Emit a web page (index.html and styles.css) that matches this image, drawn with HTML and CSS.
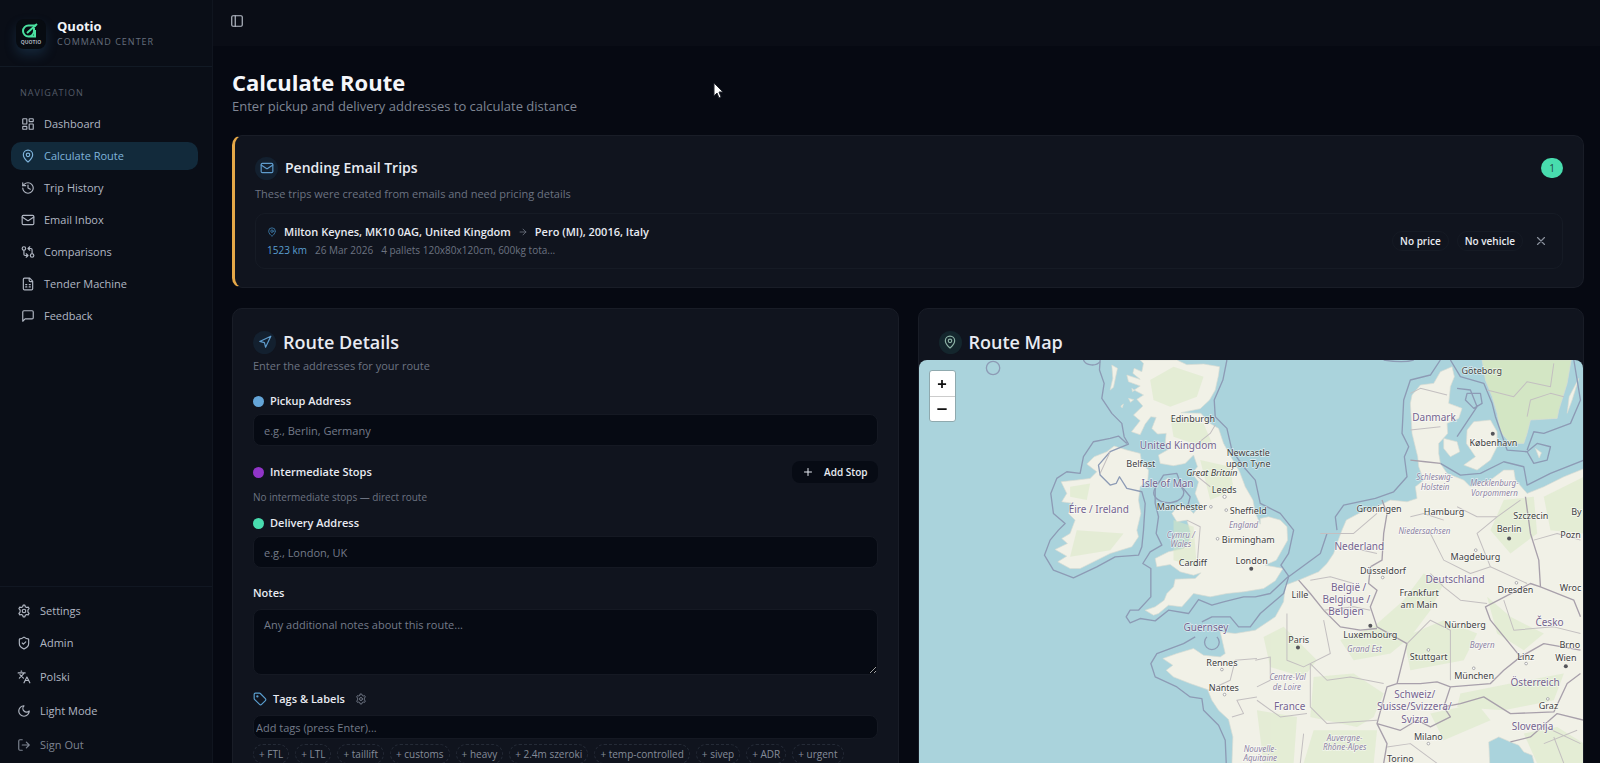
FILE: index.html
```html
<!DOCTYPE html>
<html lang="en">
<head>
    <meta charset="UTF-8">
    <meta name="viewport" content="width=device-width, initial-scale=1.0">
    <title>Quotio - Calculate Route</title>
    <link rel="stylesheet" href="styles.css">
</head>
<body>
    <!-- icon set -->
    <svg class="sprite" aria-hidden="true">
        <symbol id="i-dashboard" viewBox="0 0 24 24"><rect x="3" y="3" width="7" height="9" rx="1"/><rect x="14" y="3" width="7" height="5" rx="1"/><rect x="14" y="12" width="7" height="9" rx="1"/><rect x="3" y="16" width="7" height="5" rx="1"/></symbol>
        <symbol id="i-pin" viewBox="0 0 24 24"><path d="M20 10c0 5-5.500 10.200-7.400 11.800a1 1 0 0 1-1.200 0C9.500 20.200 4 15 4 10a8 8 0 0 1 16 0"/><circle cx="12" cy="10" r="3"/></symbol>
        <symbol id="i-history" viewBox="0 0 24 24"><path d="M3 12a9 9 0 1 0 9-9 9.750 9.750 0 0 0-6.740 2.740L3 8"/><path d="M3 3v5h5M12 7v5l4 2"/></symbol>
        <symbol id="i-mail" viewBox="0 0 24 24"><rect x="2" y="4" width="20" height="16" rx="2"/><path d="m22 7-9 5.700a2 2 0 0 1-2 0L2 7"/></symbol>
        <symbol id="i-compare" viewBox="0 0 24 24"><circle cx="5" cy="6" r="3"/><circle cx="19" cy="18" r="3"/><path d="M12 6h5a2 2 0 0 1 2 2v7M15 9l-3-3 3-3M12 18H7a2 2 0 0 1-2-2V9M9 15l3 3-3 3"/></symbol>
        <symbol id="i-file" viewBox="0 0 24 24"><path d="M15 2H6a2 2 0 0 0-2 2v16a2 2 0 0 0 2 2h12a2 2 0 0 0 2-2V7zM14 2v4a2 2 0 0 0 2 2h4M8 13h2M14 13h2M8 17h2M14 17h2"/></symbol>
        <symbol id="i-chat" viewBox="0 0 24 24"><path d="M21 15a2 2 0 0 1-2 2H7l-4 4V5a2 2 0 0 1 2-2h14a2 2 0 0 1 2 2z"/></symbol>
        <symbol id="i-gear" viewBox="0 0 24 24"><path d="M10.500 2h3l.8 2.800 2 1.200 2.900-.7 1.500 2.600-2 2.200v3.800l2 2.200-1.500 2.600-2.900-.7-2 1.200-.8 2.800h-3l-.8-2.800-2-1.200-2.900.7-1.500-2.600 2-2.200v-3.800l-2-2.200 1.500-2.600 2.900.7 2-1.200z"/><circle cx="12" cy="12" r="3"/></symbol>
        <symbol id="i-shield" viewBox="0 0 24 24"><path d="M20 13c0 5-3.500 7.500-7.700 9a1 1 0 0 1-.6 0C7.500 20.500 4 18 4 13V6a1 1 0 0 1 1-1c2 0 4.500-1.200 6.200-2.700a1.200 1.200 0 0 1 1.600 0C14.500 3.800 17 5 19 5a1 1 0 0 1 1 1zM9 12l2 2 4-4"/></symbol>
        <symbol id="i-lang" viewBox="0 0 24 24"><path d="m5 8 6 6M4 14l6-6 2-3M2 5h12M7 2h1M22 22l-5-10-5 10M14 18h6"/></symbol>
        <symbol id="i-moon" viewBox="0 0 24 24"><path d="M12 3a6 6 0 0 0 9 9 9 9 0 1 1-9-9z"/></symbol>
        <symbol id="i-logout" viewBox="0 0 24 24"><path d="M9 3H5a2 2 0 0 0-2 2v14a2 2 0 0 0 2 2h4M9 12h12M16 7l5 5-5 5"/></symbol>
        <symbol id="i-panel" viewBox="0 0 24 24"><rect x="3" y="3" width="18" height="18" rx="2"/><path d="M9 3v18"/></symbol>
        <symbol id="i-nav" viewBox="0 0 24 24"><path d="m3 11 19-9-9 19-2-8z"/></symbol>
        <symbol id="i-arrow" viewBox="0 0 24 24"><path d="M5 12h14M12 5l7 7-7 7"/></symbol>
        <symbol id="i-x" viewBox="0 0 24 24"><path d="M18 6 6 18M6 6l12 12"/></symbol>
        <symbol id="i-plus" viewBox="0 0 24 24"><path d="M5 12h14M12 5v14"/></symbol>
        <symbol id="i-tag" viewBox="0 0 24 24"><path d="M12.600 2.600A2 2 0 0 0 11.200 2H4a2 2 0 0 0-2 2v7.200a2 2 0 0 0 .6 1.400l8.700 8.700a2.400 2.400 0 0 0 3.400 0l6.600-6.600a2.400 2.400 0 0 0 0-3.400z"/><circle cx="7.500" cy="7.500" r="1"/></symbol>
    </svg>

    <div class="app">
        <aside class="sidebar">
            <div class="brand">
                <div class="logo">
                    <svg viewBox="0 0 30 30">
                        <path d="M20 6.500h-7.500a5.500 5.500 0 1 0 5.500 5.500V9M19 11v6.500h-6" fill="none" stroke="#4be0a0" stroke-width="2"/>
                        <path d="m11 14 10-9" fill="none" stroke="#4be0a0" stroke-width="2"/>
                        <text x="15" y="25" text-anchor="middle">QUOTIO</text>
                    </svg>
                </div>
                <div>
                    <p class="brand-name">Quotio</p>
                    <p class="brand-sub">COMMAND CENTER</p>
                </div>
            </div>
            <nav class="nav">
                <p class="nav-label">NAVIGATION</p>
                <a href="#"><svg class="icon"><use href="#i-dashboard"/></svg>Dashboard</a>
                <a href="#" class="active"><svg class="icon"><use href="#i-pin"/></svg>Calculate Route</a>
                <a href="#"><svg class="icon"><use href="#i-history"/></svg>Trip History</a>
                <a href="#"><svg class="icon"><use href="#i-mail"/></svg>Email Inbox</a>
                <a href="#"><svg class="icon"><use href="#i-compare"/></svg>Comparisons</a>
                <a href="#"><svg class="icon"><use href="#i-file"/></svg>Tender Machine</a>
                <a href="#"><svg class="icon"><use href="#i-chat"/></svg>Feedback</a>
            </nav>
            <div class="side-footer">
                <a href="#"><svg class="icon"><use href="#i-gear"/></svg>Settings</a>
                <a href="#"><svg class="icon"><use href="#i-shield"/></svg>Admin</a>
                <button><svg class="icon"><use href="#i-lang"/></svg>Polski</button>
                <button><svg class="icon"><use href="#i-moon"/></svg>Light Mode</button>
                <button class="muted"><svg class="icon"><use href="#i-logout"/></svg>Sign Out</button>
            </div>
        </aside>

        <div class="main">
            <header class="topbar">
                <button aria-label="Toggle sidebar"><svg class="icon"><use href="#i-panel"/></svg></button>
            </header>

            <main class="content">
                <h1>Calculate Route</h1>
                <p class="lead">Enter pickup and delivery addresses to calculate distance</p>

                <section class="card pending">
                    <div class="card-head">
                        <span class="bubble"><svg class="icon"><use href="#i-mail"/></svg></span>
                        <h2>Pending Email Trips</h2>
                        <span class="count">1</span>
                    </div>
                    <p class="hint">These trips were created from emails and need pricing details</p>
                    <div class="trip">
                        <div class="trip-info">
                            <p class="trip-route">
                                <svg class="icon pin"><use href="#i-pin"/></svg>
                                <span>Milton Keynes, MK10 0AG, United Kingdom</span>
                                <svg class="icon arrow"><use href="#i-arrow"/></svg>
                                <span>Pero (MI), 20016, Italy</span>
                            </p>
                            <p class="trip-meta">
                                <span class="km">1523 km</span>
                                <span>26 Mar 2026</span>
                                <span>4 pallets 120x80x120cm, 600kg tota...</span>
                            </p>
                        </div>
                        <span class="pill">No price</span>
                        <span class="pill">No vehicle</span>
                        <button class="close" aria-label="Dismiss"><svg class="icon"><use href="#i-x"/></svg></button>
                    </div>
                </section>

                <div class="columns">
                    <section class="card details">
                        <div class="card-head">
                            <span class="bubble"><svg class="icon"><use href="#i-nav"/></svg></span>
                            <h2 class="big">Route Details</h2>
                        </div>
                        <p class="hint">Enter the addresses for your route</p>
                        <form>
                            <label class="field-label" for="pickup"><i class="dot blue"></i>Pickup Address</label>
                            <input type="text" id="pickup" placeholder="e.g., Berlin, Germany">

                            <div class="stops">
                                <p class="field-label"><i class="dot purple"></i>Intermediate Stops</p>
                                <button type="button" class="add"><svg class="icon"><use href="#i-plus"/></svg>Add Stop</button>
                            </div>
                            <p class="empty">No intermediate stops — direct route</p>

                            <label class="field-label" for="delivery"><i class="dot green"></i>Delivery Address</label>
                            <input type="text" id="delivery" placeholder="e.g., London, UK">

                            <label class="field-label notes-label" for="notes">Notes</label>
                            <textarea id="notes" placeholder="Any additional notes about this route..."></textarea>

                            <div class="tags-head">
                                <svg class="icon tag"><use href="#i-tag"/></svg>
                                <label for="tags">Tags &amp; Labels</label>
                                <button type="button" aria-label="Manage tags"><svg class="icon"><use href="#i-gear"/></svg></button>
                            </div>
                            <input type="text" id="tags" class="tags-input" placeholder="Add tags (press Enter)...">
                            <div class="chips">
                                <button type="button">+ FTL</button>
                                <button type="button">+ LTL</button>
                                <button type="button">+ taillift</button>
                                <button type="button">+ customs</button>
                                <button type="button">+ heavy</button>
                                <button type="button">+ 2.4m szeroki</button>
                                <button type="button">+ temp-controlled</button>
                                <button type="button">+ sivep</button>
                                <button type="button">+ ADR</button>
                                <button type="button">+ urgent</button>
                            </div>
                        </form>
                    </section>

                    <section class="card map-card">
                        <div class="card-head">
                            <span class="bubble teal"><svg class="icon"><use href="#i-pin"/></svg></span>
                            <h2 class="big">Route Map</h2>
                        </div>
                        <div class="map">
                            <svg class="map-svg" viewBox="27 180 1992 1209" preserveAspectRatio="xMinYMin slice">
                                <!-- land -->
                                <g class="land">
                                    <path d="M690 180 700 190 695 215 672 205 668 220 690 238 650 225 655 245 690 258 672 270 700 285 680 298 698 318 670 345 690 362 664 395 690 404 705 372 722 350 738 352 725 385 742 402 768 400 765 430 780 445 745 465 750 490 790 497 825 490 850 465 862 500 845 520 865 545 855 580 870 615 850 640 835 625 805 618 785 640 800 665 830 660 842 700 835 730 820 745 775 755 735 775 740 800 780 793 810 815 850 825 872 818 855 835 795 837 790 860 770 880 762 900 735 920 705 930 730 945 745 940 775 915 815 920 850 880 900 890 950 880 1000 875 1060 865 1095 842 1118 805 1065 795 1098 780 1132 720 1130 680 1110 660 1075 650 1050 655 1050 672 1036 640 1028 600 1005 560 988 515 965 475 940 430 925 385 900 370 872 340 812 338 870 326 898 300 915 270 925 225 928 200 880 192 830 194 800 180z"/>
                                    <path d="M530 492 552 470 590 455 612 438 650 450 690 460 695 490 715 510 713 540 690 560 685 600 692 640 680 690 685 710 665 740 600 760 560 780 510 805 480 805 443 785 470 768 435 748 472 730 455 715 480 700 495 660 475 640 490 610 455 605 470 580 453 545 500 540 540 535 560 515z"/>
                                    <path d="M605 195 622 205 610 262 600 270 608 235zM632 318l8-6-4 12zM760 545l14-12-4 18zM665 265l8 6-6 4zM655 295l16 4-10 8z"/>
                                    <path d="M1500 310 1505 285 1530 255 1570 250 1590 215 1625 200 1632 230 1620 260 1615 310 1655 325 1645 355 1610 370 1612 400 1585 430 1585 460 1590 490 1610 520 1660 540 1680 560 1740 540 1780 510 1810 510 1815 540 1850 580 1900 560 1960 530 2022 505V1392H1872L1865 1365 1840 1355 1825 1335 1800 1325 1765 1310 1735 1325 1738 1392H965L968 1310 955 1258 925 1230 905 1200 892 1168 840 1150 790 1130 768 1110 788 1095 758 1075 800 1060 850 1045 880 1065 930 1070 945 1060 930 995 975 1000 1035 990 1095 950 1120 905 1125 855 1165 840 1225 815 1250 790 1270 760 1280 730 1295 690 1308 660 1345 640 1400 620 1440 600 1490 605 1520 595 1515 560 1540 540 1525 500 1522 470 1505 400z"/>
                                    <path d="M1600 415 1640 425 1648 455 1620 470 1600 445zM1670 390 1690 365 1740 360 1760 395 1760 440 1740 480 1700 510 1660 495 1695 470 1668 430zM1875 445 1893 458 1886 474zM2005 235 1985 300 1970 340 1976 290z"/>
                                    <path class="sweden" d="M1715 180H1982L1970 250 1945 330 1940 355 1860 360 1850 400 1840 430 1800 430 1770 395 1760 340 1745 290 1725 240z"/>
                                </g>
                                <!-- forest and upland tint -->
                                <g class="forest">
                                    <path d="M720 240 790 200 880 230 860 290 780 320 730 300zM780 350 880 370 910 440 850 430 790 410zM870 480 960 500 970 570 900 600zM790 660 850 680 860 800 790 780zM480 560 540 550 530 600 480 590zM500 690 640 700 600 750 480 770z"/>
                                    <path d="M1390 980 1480 900 1540 820 1600 850 1560 930 1500 1010 1440 1060 1330 1080 1290 1020zM1210 1130 1330 1120 1420 1180 1390 1250 1340 1280 1200 1250zM1210 1290 1400 1290 1390 1389 1180 1389zM1480 1010 1600 960 1700 1000 1660 1080 1500 1110zM1650 1180 1800 1150 1960 1120 1930 1200 1780 1230 1640 1220zM1560 1240 1700 1210 1740 1260 1600 1320zM1840 1300 1940 1280 2020 1330V1389H1880zM1780 600 1870 590 1880 700 1800 760 1740 690zM1900 590 2020 530V700L1920 690zM1730 890 1800 950 1900 1000 1840 1050 1760 1000zM1040 1230 1160 1250 1150 1389H1060zM1060 1010 1120 980 1220 1080 1180 1130 1080 1100z"/>
                                </g>
                                <!-- maritime limits -->
                                <g class="limit">
                                    <path d="M570 180 568 210 582 250 575 295 605 340 635 370 642 410 655 432 600 455 565 495 570 525 600 555 618 550 628 530 650 565 695 575 705 610 700 690 695 740 685 765 615 770 560 800 490 833 430 810 403 765 420 720 445 690 465 670 430 640 422 580 440 535 470 515 510 520 520 470 550 425 600 415 625 408 650 430"/>
                                    <path d="M950 180 938 240 912 300 915 350 950 385 965 450 1000 500 1035 540 1050 610 1110 640 1150 690 1135 760 1112 795 1135 828 1080 880 1035 890 1000 890 940 905 905 915 865 898 835 940 775 930 735 962 690 955 660 968 648 950 660 930 685 930 722 890 722 805 698 790 720 755 755 735 738 700 745 650 735 610 735 565 760 525 800 520 815 560 840 590 832 620"/>
                                    <path d="M735 565a45 30 0 1 0 70-10M520 180a28 22 0 0 0 50 5"/>
                                    <circle cx="249" cy="204" r="20"/>
                                    <path d="M875 965 905 950 960 950 985 980 1020 980 1050 940 1120 880 1135 830 1230 760 1250 700M855 1010 820 1030 740 1060 722 1090 735 1130 800 1160 840 1190 875 1195 880 1230 925 1275 945 1320 948 1389M890 1010a22 22 0 1 0 30 0M1280 690 1275 650 1300 615 1395 595 1450 575 1490 530 1482 470 1495 440 1475 400 1480 300 1500 240 1560 225 1590 180M1620 180 1650 230 1720 250 1745 310 1755 350 1790 450 1850 455 1880 430 1920 440 1910 480 1870 490 1850 455M1640 410 1700 320 1680 270 1640 265M1670 280l40 0 5 30-25 15-25-25zM1990 180 2010 300 1980 370 1900 400 1870 395 1850 450M1590 490 1650 525 1710 520 1780 485 1840 500 1850 555 1920 520 2020 480"/>
                                    <path d="M1420 180q60 10 90 0"/>
                                </g>
                                <!-- country and region borders -->
                                <g class="border">
                                    <path d="M1500 480 1545 485 1590 490M1415 600 1430 640 1420 700 1415 780 1380 800 1375 850 1400 870 1380 920 1400 980 1490 1030 1460 1150 1530 1150 1580 1145 1620 1160 1740 1150 1780 1110 1830 1070 1740 960 1725 920 1860 850 1890 860 1885 780 1860 700 1845 590M1165 840 1200 880 1240 930 1290 980 1350 990 1400 985M1460 1150 1430 1160 1400 1270 1430 1330 1420 1389M1620 1160 1600 1220 1650 1210 1720 1190 1800 1240 1930 1235 1970 1150 2010 1120M1890 860 1990 900 2010 950M1830 1070 1900 1030 2010 1050M1400 1270 1470 1290 1520 1260 1560 1280 1620 1250 1600 1220M1800 1325 1860 1310 1940 1240 2020 1260"/>
                                    <path class="thin" d="M1230 700 1330 700 1400 640M1310 740 1400 760M1200 840 1260 830 1330 850M1240 930 1330 920 1380 930M1130 940 1130 1080 1180 1100 1260 1060 1240 960M1035 1080 1080 1070 1080 1140 1040 1160M1200 1090 1250 1140 1320 1130 1420 1150M1200 1090 1200 1220 1250 1270 1400 1260M1040 1200 1110 1250 1190 1240M1180 1300 1170 1389M1490 1030 1560 960 1620 990 1620 1140M1560 820 1600 860 1650 900 1730 910M1500 700 1560 700 1600 780 1680 820 1740 800 1850 850M1640 620 1700 650 1760 650 1830 600M1740 800 1700 700 1760 650M1780 900 1810 990 1930 980 2010 1000M1500 280 1530 265 1610 285M1500 390 1590 380M1730 270 1810 290 1850 245 1920 260 1930 190M1850 350 1860 300 1920 280 1960 290M850 520 900 560M830 660 870 680 860 800M850 440 900 400 915 375M600 455 570 520M1600 660 1540 640 1500 650M895 1170 960 1140 975 1080 1040 1075M965 1250 1000 1240 980 1200 1040 1190M1870 720 1940 700 2010 720M1905 1280 2010 1330M1900 1330 2000 1290M1930 1310 1960 1389M1430 1340 1500 1330 1580 1389"/>
                                </g>
                                <!-- cities -->
                                <g class="city">
                                    <text x="848" y="366">Edinburgh</text>
                                    <text x="692" y="501">Belfast</text>
                                    <text x="1014" y="468">Newcastle</text>
                                    <text x="1014" y="502">upon Tyne</text>
                                    <text x="942" y="580">Leeds</text>
                                    <text x="815" y="630">Manchester</text>
                                    <text x="1014" y="641">Sheffield</text>
                                    <text x="1014" y="728">Birmingham</text>
                                    <text x="848" y="798">Cardiff</text>
                                    <text x="1024" y="791">London</text>
                                    <text x="935" y="1097">Rennes</text>
                                    <text x="941" y="1173">Nantes</text>
                                    <text x="1714" y="223">Göteborg</text>
                                    <text x="1749" y="439">København</text>
                                    <text x="1406" y="636">Groningen</text>
                                    <text x="1601" y="645">Hamburg</text>
                                    <text x="1861" y="656">Szczecin</text>
                                    <text x="1796" y="697">Berlin</text>
                                    <text x="1998" y="646">By</text>
                                    <text x="1980" y="714">Pozn</text>
                                    <text x="1695" y="780">Magdeburg</text>
                                    <text x="1418" y="821">Düsseldorf</text>
                                    <text x="1169" y="894">Lille</text>
                                    <text x="1526" y="887">Frankfurt</text>
                                    <text x="1526" y="922">am Main</text>
                                    <text x="1815" y="879">Dresden</text>
                                    <text x="1980" y="873">Wroc</text>
                                    <text x="1664" y="982">Nürnberg</text>
                                    <text x="1380" y="1013">Luxembourg</text>
                                    <text x="1165" y="1027">Paris</text>
                                    <text x="1978" y="1042">Brno</text>
                                    <text x="1846" y="1079">Linz</text>
                                    <text x="1555" y="1080">Stuttgart</text>
                                    <text x="1966" y="1082">Wien</text>
                                    <text x="1691" y="1135">München</text>
                                    <text x="1914" y="1225">Graz</text>
                                    <text x="1554" y="1318">Milano</text>
                                    <text x="1470" y="1386">Torino</text>
                                </g>
                                <g class="capital">
                                    <circle cx="1023" cy="806" r="6"/><circle cx="1163" cy="1042" r="6"/><circle cx="1796" cy="715" r="6"/><circle cx="1380" cy="977" r="6"/><circle cx="1966" cy="1098" r="6"/><circle cx="1747" cy="401" r="6"/>
                                </g>
                                <g class="town">
                                    <circle cx="943" cy="590" r="5"/><circle cx="902" cy="620" r="4"/><circle cx="948" cy="630" r="4"/><circle cx="922" cy="716" r="4"/><circle cx="935" cy="1108" r="4"/><circle cx="943" cy="1183" r="4"/><circle cx="1696" cy="750" r="4"/><circle cx="1417" cy="832" r="4"/><circle cx="1554" cy="1049" r="4"/><circle cx="1690" cy="1104" r="4"/><circle cx="1847" cy="1090" r="4"/><circle cx="1912" cy="1196" r="4"/><circle cx="1554" cy="1330" r="4"/><circle cx="1818" cy="848" r="4"/>
                                </g>
                                <g class="country">
                                    <text x="804" y="448">United Kingdom</text>
                                    <text x="772" y="562">Isle of Man</text>
                                    <text x="566" y="640">Éire / Ireland</text>
                                    <text x="887" y="993">Guernsey</text>
                                    <text x="1571" y="363">Danmark</text>
                                    <text x="1347" y="749">Nederland</text>
                                    <text x="1634" y="848">Deutschland</text>
                                    <text x="1315" y="871">België /</text>
                                    <text x="1308" y="908">Belgique /</text>
                                    <text x="1307" y="945">Belgien</text>
                                    <text x="1917" y="976">Česko</text>
                                    <text x="1874" y="1158">Österreich</text>
                                    <text x="1513" y="1192">Schweiz/</text>
                                    <text x="1512" y="1229">Suisse/Svizzera/</text>
                                    <text x="1514" y="1267">Svizra</text>
                                    <text x="1138" y="1229">France</text>
                                    <text x="1866" y="1288">Slovenija</text>
                                </g>
                                <g class="region">
                                    <text class="island" x="905" y="529">Great Britain</text>
                                    <text x="1000" y="684">England</text>
                                    <text x="812" y="715">Cymru /</text>
                                    <text x="812" y="742">Wales</text>
                                    <text x="1573" y="541">Schleswig-</text>
                                    <text x="1574" y="570">Holstein</text>
                                    <text x="1752" y="559">Mecklenburg-</text>
                                    <text x="1752" y="589">Vorpommern</text>
                                    <text x="1542" y="703">Niedersachsen</text>
                                    <text x="1362" y="1055">Grand Est</text>
                                    <text x="1715" y="1044">Bayern</text>
                                    <text x="1132" y="1139">Centre-Val</text>
                                    <text x="1130" y="1169">de Loire</text>
                                    <text x="1303" y="1322">Auvergne-</text>
                                    <text x="1303" y="1350">Rhône-Alpes</text>
                                    <text x="1050" y="1355">Nouvelle-</text>
                                    <text x="1050" y="1382">Aquitaine</text>
                                </g>
                            </svg>
                            <div class="zoom">
                                <button aria-label="Zoom in"><svg class="icon"><use href="#i-plus"/></svg></button>
                                <button aria-label="Zoom out"><svg class="icon" viewBox="0 0 24 24"><path d="M4 12h16"/></svg></button>
                            </div>
                        </div>
                    </section>
                </div>
            </main>
        </div>
    </div>

    <svg class="cursor" viewBox="0 0 12 18"><path d="M1 1v13l3-3 2 5 2-1-2-5h4z"/></svg>
</body>
</html>
```

FILE: styles.css
```css
* {
    margin: 0;
    padding: 0;
    box-sizing: border-box;
}

body {
    background: #060912;
    color: #e8ebf2;
    font-family: "Open Sans", "Noto Sans", sans-serif;
    font-size: 11px;
    line-height: 16px;
}

button, input, textarea {
    font: inherit;
    color: inherit;
    background: none;
    border: 0;
    outline: 0;
}

button {
    cursor: pointer;
}

a {
    color: inherit;
    text-decoration: none;
}

.sprite {
    display: none;
}

.icon {
    width: 14px;
    height: 14px;
    flex: none;
    fill: none;
    stroke: currentColor;
    stroke-width: 2;
    stroke-linecap: round;
    stroke-linejoin: round;
}

.app {
    display: flex;
    height: 100vh;
}

/* sidebar */
.sidebar {
    width: 213px;
    flex: none;
    display: flex;
    flex-direction: column;
    background: #0a0e17;
    border-right: 1px solid #10151f;
    color: #b1b7c3;
    font-weight: 500;
}

.brand {
    display: flex;
    align-items: center;
    gap: 11px;
    height: 67px;
    padding: 2px 16px 0;
    border-bottom: 1px solid #121a25;
}

.logo {
    width: 30px;
    height: 30px;
    border-radius: 8px;
    background: #070b11;
    box-shadow: 0 6px 12px rgba(50, 110, 160, 0.25);
}

.logo svg {
    display: block;
}

.logo text {
    font-size: 5px;
    font-weight: 700;
    fill: #aab2bd;
}

.brand-name {
    font-size: 13px;
    font-weight: 700;
    color: #f1f3f8;
}

.brand-sub {
    font-size: 9px;
    letter-spacing: 1px;
    color: #666e7c;
}

.nav {
    flex: 1;
    display: flex;
    flex-direction: column;
    gap: 4px;
    padding: 18px 14px 0 11px;
}

.nav-label {
    padding: 0 9px;
    margin-bottom: 5px;
    font-size: 9px;
    letter-spacing: 1px;
    color: #555c69;
}

.nav a {
    display: flex;
    align-items: center;
    gap: 9px;
    height: 28px;
    padding: 0 10px;
    border-radius: 10px;
}

.nav a.active {
    background: #122a3b;
    color: #7fb4dc;
}

.side-footer {
    display: flex;
    flex-direction: column;
    gap: 4px;
    padding: 10px 17px 4px;
    border-top: 1px solid #111722;
}

.side-footer a,
.side-footer button {
    display: flex;
    align-items: center;
    gap: 9px;
    height: 28px;
}

.side-footer button {
    margin-top: 2px;
}

.side-footer .muted {
    color: #7d8491;
}

/* main column */
.main {
    flex: 1;
    min-width: 0;
    overflow-y: auto;
    scrollbar-width: none;
}

.topbar {
    display: flex;
    align-items: center;
    height: 46px;
    padding: 0 17px 4px;
    background: #0a0d16;
    color: #b9bfca;
}

.topbar button {
    display: flex;
}

.content {
    padding: 20px 16px 20px 19px;
}

h1 {
    font-size: 22px;
    line-height: 32px;
    font-weight: 700;
    color: #f4f6fa;
}

.lead {
    font-size: 13px;
    color: #7f8694;
}

.card {
    background: #10141e;
    border: 1px solid #191d27;
    border-radius: 10px;
}

.card-head {
    display: flex;
    align-items: center;
    gap: 7px;
}

.bubble {
    display: flex;
    align-items: center;
    justify-content: center;
    width: 23px;
    height: 23px;
    border-radius: 50%;
    background: #13202f;
    color: #5f9ccd;
}

.bubble.teal {
    background: #14262d;
    color: #8db3a6;
}

h2 {
    font-size: 14px;
    line-height: 24px;
    font-weight: 600;
}

h2.big {
    font-size: 18px;
}

.hint {
    color: #6c7381;
}

/* pending trips */
.pending {
    margin-top: 21px;
    padding: 20px 20px 18px;
    border-left: 3px solid #e5a848;
}

.count {
    margin-left: auto;
    padding: 0 8px;
    border-radius: 10px;
    background: #48dcae;
    color: #1c4a45;
    font-size: 10px;
    line-height: 20px;
}

.pending .hint {
    margin: 6px 0 11px;
}

.trip {
    display: flex;
    align-items: center;
    gap: 8px;
    padding: 10px 14px 10px 11px;
    border: 1px solid #161b25;
    border-radius: 10px;
}

.trip-info {
    flex: 1;
}

.trip-route {
    display: flex;
    align-items: center;
    gap: 7px;
    font-weight: 600;
}

.trip-route .icon {
    width: 10px;
    height: 10px;
    color: #6c7381;
}

.trip-route .pin {
    color: #3f7fb0;
}

.trip-meta {
    display: flex;
    gap: 8px;
    margin-top: 2px;
    font-size: 10px;
    color: #6c7381;
}

.km {
    color: #5a9fd0;
}

.pill {
    padding: 1px 7px;
    border: 1px solid #151a24;
    border-radius: 10px;
    font-size: 10px;
    font-weight: 600;
}

.close {
    display: flex;
    margin-left: 3px;
    color: #8a909c;
}

/* route form and map */
.columns {
    display: grid;
    grid-template-columns: 1fr 1fr;
    gap: 19px;
    margin-top: 20px;
}

.details {
    padding: 21px 20px 24px;
}

.details .hint {
    margin-top: 4px;
}

.details form {
    display: flex;
    flex-direction: column;
    margin-top: 19px;
}

.field-label {
    display: flex;
    align-items: center;
    gap: 6px;
    font-weight: 600;
}

.dot {
    width: 11px;
    height: 11px;
    border-radius: 50%;
}

.blue {
    background: #64a5d8;
}

.purple {
    background: #9135c8;
}

.green {
    background: #48dcae;
}

.details input,
.details textarea {
    width: 100%;
    height: 32px;
    margin-top: 5px;
    padding: 0 10px;
    background: #060a13;
    border: 1px solid #151923;
    border-radius: 8px;
}

::placeholder {
    color: #747b89;
}

.stops {
    display: flex;
    align-items: center;
    justify-content: space-between;
    margin-top: 15px;
}

.add {
    display: flex;
    align-items: center;
    gap: 10px;
    height: 22px;
    padding: 0 10px;
    border-radius: 8px;
    background: #070b14;
    font-size: 10px;
    font-weight: 600;
}

.add .icon {
    width: 12px;
    height: 12px;
}

.empty {
    margin: 6px 0 10px;
    font-size: 10px;
    color: #6c7381;
}

.notes-label {
    margin-top: 17px;
}

.details textarea {
    display: block;
    height: 66px;
    margin-top: 8px;
    padding: 7px 10px;
    resize: vertical;
}

.tags-head {
    display: flex;
    align-items: center;
    gap: 6px;
    margin-top: 16px;
    font-weight: 600;
}

.tags-head .tag {
    color: #5a9fd0;
}

.tags-head button {
    display: flex;
    margin-left: 4px;
    color: #6c7381;
}

.tags-head button .icon {
    width: 12px;
    height: 12px;
}

.details .tags-input {
    height: 24px;
    margin-top: 8px;
    padding: 0 2px;
}

.chips {
    display: flex;
    flex-wrap: wrap;
    gap: 6px;
    margin-top: 5px;
}

.chips button {
    height: 20px;
    padding: 0 5px;
    border: 1px dashed #252b37;
    border-radius: 10px;
    color: #858c99;
    font-size: 10px;
}

.map-card .card-head {
    padding: 21px 20px 6px;
}

.map {
    position: relative;
    height: 480px;
    border-radius: 8px;
    overflow: hidden;
    background: #aad3dc;
}

.map-svg {
    display: block;
    width: 100%;
    aspect-ratio: 1992 / 1209;
    font-family: "Noto Sans", sans-serif;
    text-anchor: middle;
}

.land {
    fill: #f1f1e7;
    stroke: #d9dcd3;
    stroke-width: 2;
    stroke-linejoin: round;
}

.sweden {
    fill: #d3e6c4;
}

.forest {
    fill: #d8e9c4;
    opacity: 0.5;
}

.limit {
    fill: none;
    stroke: #8d9bb5;
    stroke-width: 4;
    stroke-linejoin: round;
}

.border {
    fill: none;
    stroke: #a8a0ab;
    stroke-width: 4;
    stroke-linejoin: round;
}

.thin {
    stroke: #c3bfc0;
    stroke-width: 3;
}

.city {
    fill: #3f3f42;
    font-size: 27px;
}

.country {
    fill: #74648f;
    font-size: 30px;
}

.region {
    fill: #8d83a3;
    font-size: 24px;
    font-style: italic;
}

.region .island {
    fill: #3f3f42;
    font-size: 27px;
}

.city, .country, .region {
    paint-order: stroke;
    stroke: rgba(255, 255, 255, 0.6);
    stroke-width: 4;
}

.capital circle {
    fill: #55555a;
}

.town circle {
    fill: #ffffff;
    stroke: #8a8a8e;
    stroke-width: 2;
}

.zoom {
    position: absolute;
    top: 10px;
    left: 10px;
    display: flex;
    flex-direction: column;
    border: 1px solid #8fa9ae;
    border-radius: 3px;
    background: #ffffff;
    color: #111111;
}

.zoom button {
    display: flex;
    align-items: center;
    justify-content: center;
    width: 25px;
    height: 25px;
}

.zoom button + button {
    border-top: 1px solid #cccccc;
}

.zoom .icon {
    stroke-width: 3;
    stroke-linecap: butt;
}

.cursor {
    position: absolute;
    top: 82px;
    left: 713px;
    width: 12px;
    height: 18px;
    fill: #ffffff;
    stroke: #20242c;
    pointer-events: none;
}
```
